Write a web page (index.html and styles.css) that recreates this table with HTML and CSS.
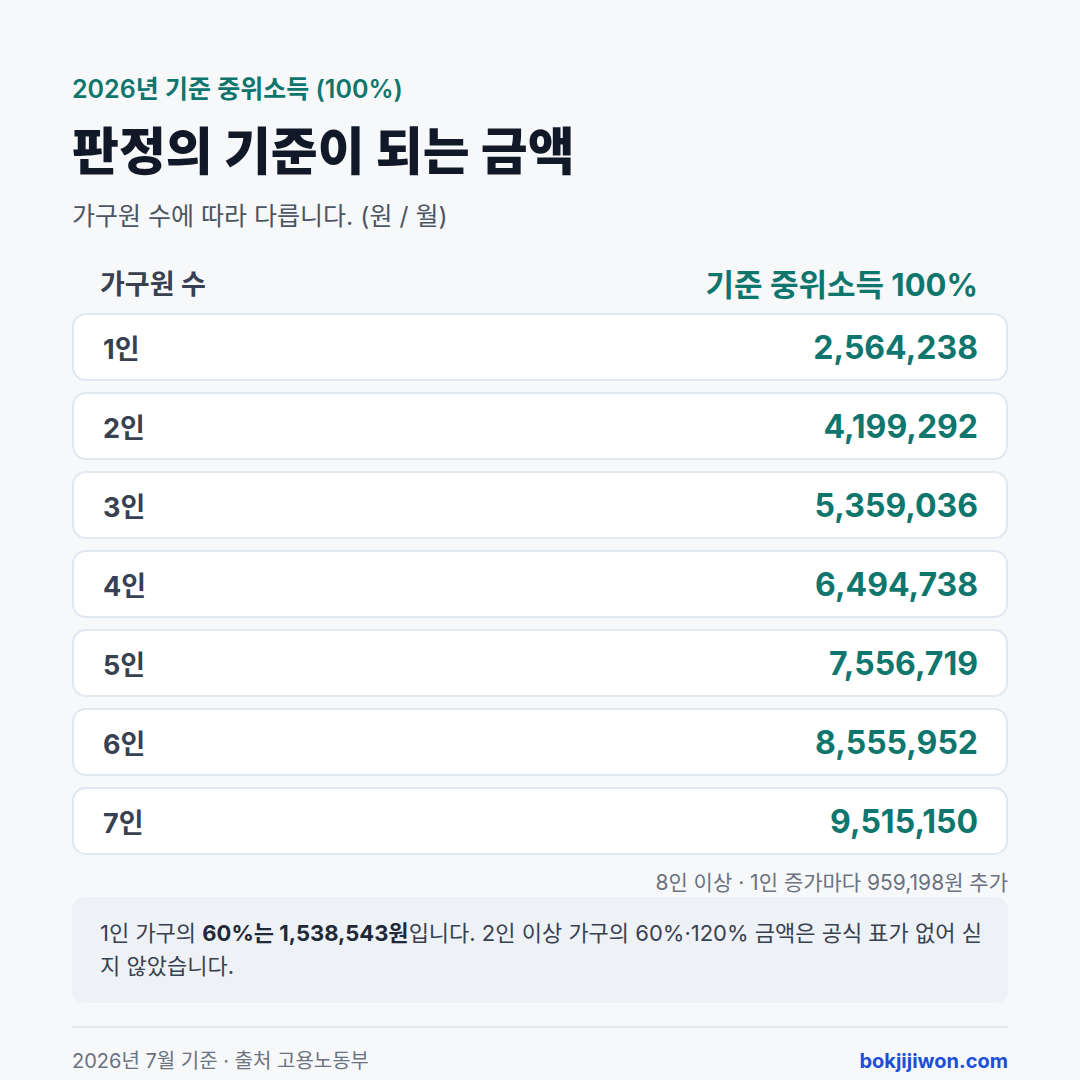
FILE: index.html
```html
<!DOCTYPE html>
<html lang="ko">
<head>
<meta charset="utf-8">
<link rel="stylesheet" href="styles.css">
</head>
<body>
<main class="page">
  <p class="eyebrow">2026년 기준 중위소득 (100%)</p>
  <h1 class="title">판정의 기준이 되는 금액</h1>
  <p class="subtitle">가구원 수에 따라 다릅니다. (원 / 월)</p>

  <div class="thead">
    <span class="th-left">가구원 수</span>
    <span class="th-right">기준 중위소득 100%</span>
  </div>

  <ul class="rows">
    <li class="row"><span class="label">1인</span><span class="value">2,564,238</span></li>
    <li class="row"><span class="label">2인</span><span class="value">4,199,292</span></li>
    <li class="row"><span class="label">3인</span><span class="value">5,359,036</span></li>
    <li class="row"><span class="label">4인</span><span class="value">6,494,738</span></li>
    <li class="row"><span class="label">5인</span><span class="value">7,556,719</span></li>
    <li class="row"><span class="label">6인</span><span class="value">8,555,952</span></li>
    <li class="row"><span class="label">7인</span><span class="value">9,515,150</span></li>
  </ul>

  <p class="note">8인 이상 · 1인 증가마다 959,198원 추가</p>

  <div class="info">
    1인 가구의 <b>60%는 1,538,543원</b>입니다. 2인 이상 가구의 60%·120% 금액은 공식 표가 없어 싣지 않았습니다.
  </div>

  <footer class="footer">
    <span class="src">2026년 7월 기준 · 출처 고용노동부</span>
    <span class="site">bokjijiwon.com</span>
  </footer>
</main>
</body>
</html>
```

FILE: styles.css
```css
* { box-sizing: border-box; margin: 0; padding: 0; }
html, body { width: 1080px; height: 1080px; }
body {
  background: #f7f8fa;
  font-family: Inter, "Noto Sans CJK KR", "Noto Sans", sans-serif;
  color: #111827;
  overflow: hidden;
}
.page {
  padding: 72px 72px 0 72px;
  display: flex;
  flex-direction: column;
}
.eyebrow {
  font-size: 25px;
  font-weight: 600;
  color: #0f766e;
  line-height: 34px;
}
.title {
  margin-top: 14px;
  font-size: 51px;
  font-weight: 800;
  color: #111827;
  line-height: 64px;
}
.subtitle {
  margin-top: 15px;
  font-size: 25px;
  color: #4b5563;
  line-height: 34px;
}
.thead {
  margin-top: 29px;
  display: flex;
  justify-content: space-between;
  align-items: center;
  padding: 0 30px 0 28px;
  height: 40px;
}
.th-left {
  font-size: 27px;
  font-weight: 700;
  color: #374151;
}
.th-right {
  font-size: 31px;
  font-weight: 700;
  color: #0f766e;
}
.rows {
  list-style: none;
  margin-top: 11px;
  display: flex;
  flex-direction: column;
  gap: 11px;
}
.row {
  height: 68px;
  background: #ffffff;
  border: 2px solid #e2e8f0;
  border-radius: 14px;
  display: flex;
  align-items: center;
  justify-content: space-between;
  padding: 0 28px 0 29px;
}
.label {
  font-size: 27px;
  font-weight: 700;
  color: #374151;
}
.value {
  font-size: 32px;
  font-weight: 700;
  color: #0f766e;
}
.note {
  margin-top: 15px;
  text-align: right;
  font-size: 21px;
  color: #6b7280;
  line-height: 26px;
}
.info {
  margin-top: 1px;
  background: #eef1f5;
  border-radius: 12px;
  padding: 20px 26px 20px 28px;
  font-size: 22px;
  line-height: 33px;
  color: #374151;
  word-break: break-all;
}
.info b { font-weight: 700; color: #1f2937; }
.footer {
  margin-top: 23px;
  border-top: 2px solid #e2e8f0;
  padding-top: 20px;
  display: flex;
  justify-content: space-between;
  align-items: center;
  font-size: 20px;
  line-height: 26px;
}
.src { color: #6b7280; }
.site { color: #1d4ed8; font-weight: 700; }
```
